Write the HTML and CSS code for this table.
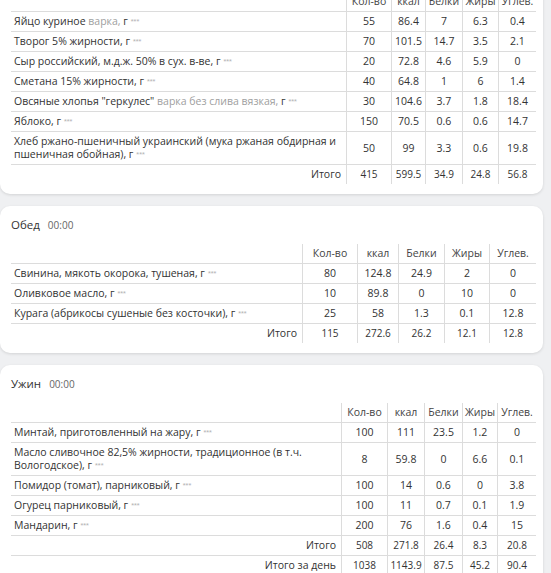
FILE: index.html
```html
<!DOCTYPE html>
<html lang="ru">
<head>
<meta charset="utf-8">
<title>Рацион</title>
<link rel="stylesheet" href="styles.css">
</head>
<body>
<div class="page">

  <section class="card card-first">
    <div class="meal-title"><span class="meal-name">Завтрак</span><span class="meal-time">00:00</span></div>
    <table class="nut t1">
      <colgroup><col class="c-name"><col class="c-qty"><col class="c-kcal"><col class="c-p"><col class="c-f"><col class="c-c"></colgroup>
      <thead><tr><th></th><th>Кол-во</th><th>ккал</th><th>Белки</th><th>Жиры</th><th>Углев.</th></tr></thead>
      <tbody>
        <tr><td class="name">Яйцо куриное <span class="note">варка,</span> г <span class="mark">***</span></td><td>55</td><td>86.4</td><td>7</td><td>6.3</td><td>0.4</td></tr>
        <tr><td class="name">Творог 5% жирности, г <span class="mark">***</span></td><td>70</td><td>101.5</td><td>14.7</td><td>3.5</td><td>2.1</td></tr>
        <tr><td class="name">Сыр российский, м.д.ж. 50% в сух. в-ве, г <span class="mark">***</span></td><td>20</td><td>72.8</td><td>4.6</td><td>5.9</td><td>0</td></tr>
        <tr><td class="name">Сметана 15% жирности, г <span class="mark">***</span></td><td>40</td><td>64.8</td><td>1</td><td>6</td><td>1.4</td></tr>
        <tr><td class="name">Овсяные хлопья "геркулес" <span class="note">варка без слива вязкая,</span> г <span class="mark">***</span></td><td>30</td><td>104.6</td><td>3.7</td><td>1.8</td><td>18.4</td></tr>
        <tr><td class="name">Яблоко, г <span class="mark">***</span></td><td>150</td><td>70.5</td><td>0.6</td><td>0.6</td><td>14.7</td></tr>
        <tr><td class="name">Хлеб ржано-пшеничный украинский (мука ржаная обдирная и пшеничная обойная), г <span class="mark">***</span></td><td>50</td><td>99</td><td>3.3</td><td>0.6</td><td>19.8</td></tr>
        <tr class="total"><td class="label">Итого</td><td>415</td><td>599.5</td><td>34.9</td><td>24.8</td><td>56.8</td></tr>
      </tbody>
    </table>
  </section>

  <section class="card">
    <div class="meal-title"><span class="meal-name">Обед</span><span class="meal-time">00:00</span></div>
    <table class="nut t2">
      <colgroup><col class="c-name"><col class="c-qty"><col class="c-kcal"><col class="c-p"><col class="c-f"><col class="c-c"></colgroup>
      <thead><tr><th></th><th>Кол-во</th><th>ккал</th><th>Белки</th><th>Жиры</th><th>Углев.</th></tr></thead>
      <tbody>
        <tr><td class="name">Свинина, мякоть окорока, тушеная, г <span class="mark">***</span></td><td>80</td><td>124.8</td><td>24.9</td><td>2</td><td>0</td></tr>
        <tr><td class="name">Оливковое масло, г <span class="mark">***</span></td><td>10</td><td>89.8</td><td>0</td><td>10</td><td>0</td></tr>
        <tr><td class="name">Курага (абрикосы сушеные без косточки), г <span class="mark">***</span></td><td>25</td><td>58</td><td>1.3</td><td>0.1</td><td>12.8</td></tr>
        <tr class="total"><td class="label">Итого</td><td>115</td><td>272.6</td><td>26.2</td><td>12.1</td><td>12.8</td></tr>
      </tbody>
    </table>
  </section>

  <section class="card">
    <div class="meal-title"><span class="meal-name">Ужин</span><span class="meal-time">00:00</span></div>
    <table class="nut t3">
      <colgroup><col class="c-name"><col class="c-qty"><col class="c-kcal"><col class="c-p"><col class="c-f"><col class="c-c"></colgroup>
      <thead><tr><th></th><th>Кол-во</th><th>ккал</th><th>Белки</th><th>Жиры</th><th>Углев.</th></tr></thead>
      <tbody>
        <tr><td class="name">Минтай, приготовленный на жару, г <span class="mark">***</span></td><td>100</td><td>111</td><td>23.5</td><td>1.2</td><td>0</td></tr>
        <tr><td class="name">Масло сливочное 82,5% жирности, традиционное (в т.ч. Вологодское), г <span class="mark">***</span></td><td>8</td><td>59.8</td><td>0</td><td>6.6</td><td>0.1</td></tr>
        <tr><td class="name">Помидор (томат), парниковый, г <span class="mark">***</span></td><td>100</td><td>14</td><td>0.6</td><td>0</td><td>3.8</td></tr>
        <tr><td class="name">Огурец парниковый, г <span class="mark">***</span></td><td>100</td><td>11</td><td>0.7</td><td>0.1</td><td>1.9</td></tr>
        <tr><td class="name">Мандарин, г <span class="mark">***</span></td><td>200</td><td>76</td><td>1.6</td><td>0.4</td><td>15</td></tr>
        <tr class="total"><td class="label">Итого</td><td>508</td><td>271.8</td><td>26.4</td><td>8.3</td><td>20.8</td></tr>
        <tr class="total"><td class="label">Итого за день</td><td>1038</td><td>1143.9</td><td>87.5</td><td>45.2</td><td>90.4</td></tr>
      </tbody>
    </table>
  </section>

</div>
</body>
</html>
```

FILE: styles.css
```css
html, body {
  margin: 0;
  padding: 0;
  background: #eff0f2;
  font-family: "Open Sans", "Liberation Sans", sans-serif;
  color: #333;
  overflow: hidden;
}

.page {
  display: flex;
  flex-direction: column;
  gap: 12px;
  padding: 0 8px 20px 0;
}

.card {
  background: #fff;
  border-radius: 10px;
  box-shadow: 0 1px 3px rgba(0, 0, 0, 0.12);
  padding: 11px 8px 10px 11px;
}

.card-first {
  margin-top: -46px;
}

.meal-title {
  display: flex;
  align-items: baseline;
  gap: 8px;
  height: 16px;
  line-height: 16px;
  margin-bottom: 11px;
}

.meal-name {
  font-size: 11.5px;
  color: #333;
}

.meal-time {
  font-size: 10px;
  color: #666;
}

.nut {
  width: 525px;
  table-layout: fixed;
  border-collapse: separate;
  border-spacing: 0;
  font-size: 10.5px;
  line-height: 13px;
}

.nut th {
  font-weight: normal;
  color: #444;
  text-align: center;
  padding: 3px 0;
  height: 13px;
  white-space: nowrap;
}

.nut th + th {
  border-left: 1px solid #dcdcdc;
}

.nut td {
  border-top: 1px solid #dcdcdc;
  padding: 3px 0;
  height: 13px;
  text-align: center;
  vertical-align: middle;
}

.nut td + td {
  border-left: 1px solid #dcdcdc;
}

.nut td.name {
  text-align: left;
  padding-left: 3px;
  padding-right: 4px;
}

.note {
  color: #a0a0a0;
}

.mark {
  font-size: 6px;
  line-height: 0;
  color: #aaa;
  position: relative;
  top: -2px;
  letter-spacing: -0.5px;
}

.total td {
  font-size: 10px;
}

.total td.label {
  font-size: 10.5px;
  text-align: right;
  padding-right: 5px;
}

.t1 .c-name { width: 335px; }
.t1 .c-qty { width: 45px; }
.t1 .c-kcal { width: 34px; }
.t1 .c-p { width: 37px; }
.t1 .c-f { width: 36px; }
.t1 .c-c { width: 38px; }

.t2 .c-name { width: 291px; }
.t2 .c-qty { width: 55px; }
.t2 .c-kcal { width: 41px; }
.t2 .c-p { width: 46px; }
.t2 .c-f { width: 45px; }
.t2 .c-c { width: 47px; }

.t3 .c-name { width: 330px; }
.t3 .c-qty { width: 46px; }
.t3 .c-kcal { width: 37px; }
.t3 .c-p { width: 38px; }
.t3 .c-f { width: 35px; }
.t3 .c-c { width: 39px; }
```
